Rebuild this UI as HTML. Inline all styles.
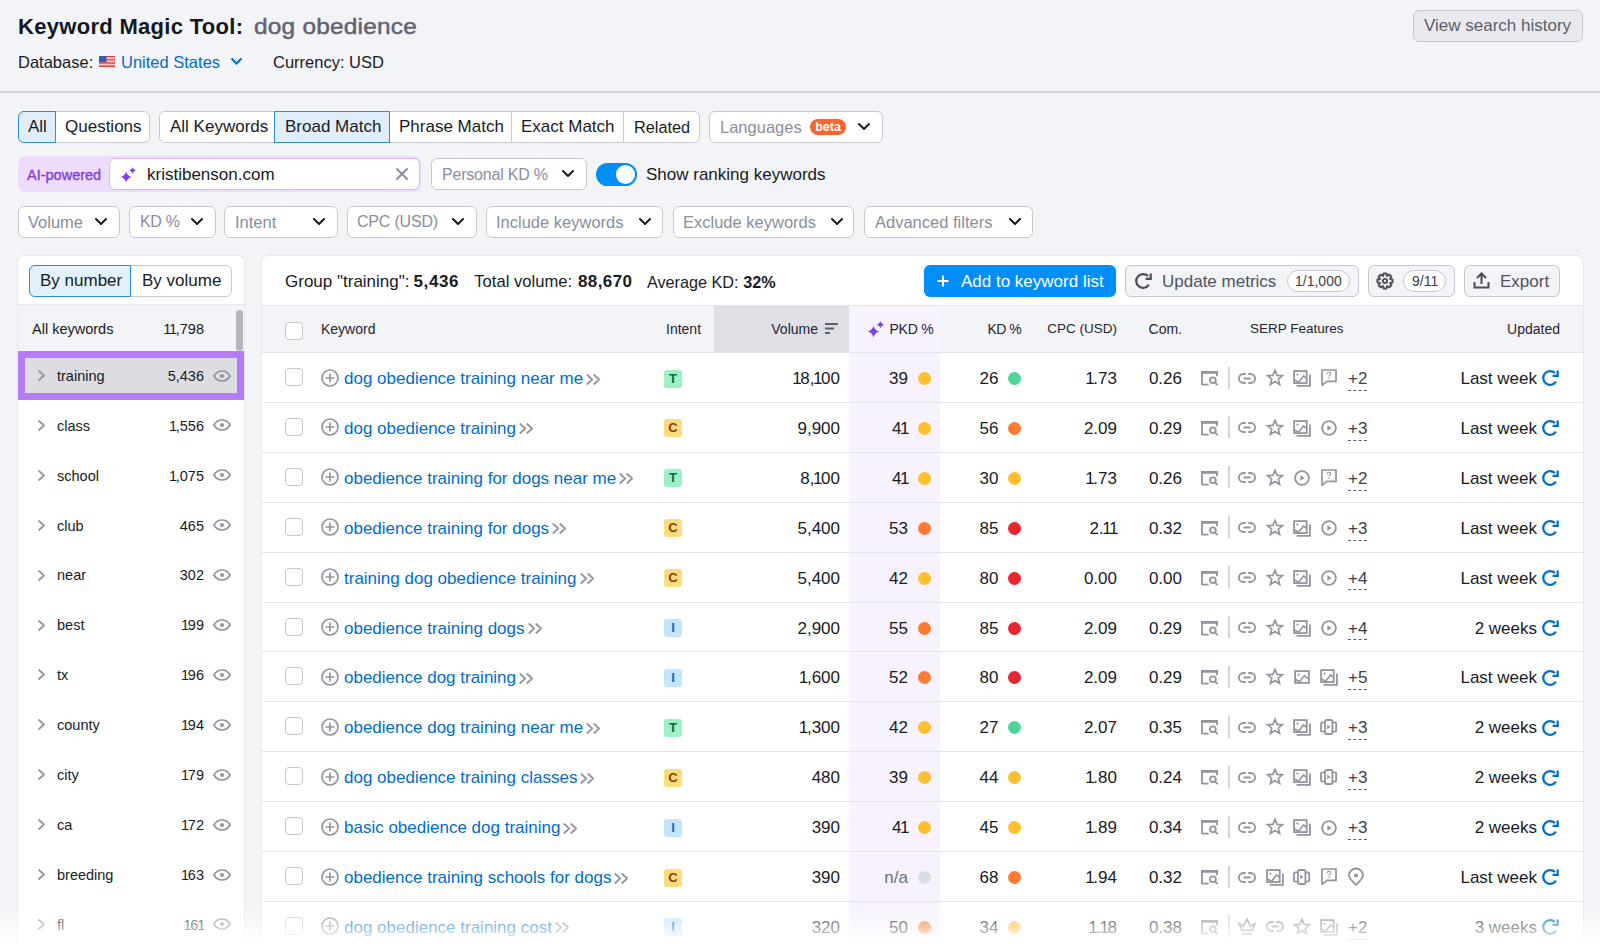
<!DOCTYPE html>
<html><head><meta charset="utf-8"><style>
*{box-sizing:border-box;margin:0;padding:0}
html,body{width:1600px;height:952px;overflow:hidden}
body{position:relative;background:#f3f4f8;font-family:"Liberation Sans",sans-serif;color:#191b23;font-size:17px}
.a{position:absolute;white-space:nowrap}
.t{position:absolute;white-space:nowrap;line-height:20px}
.btn{position:absolute;background:#fff;border:1px solid #c8cad2;border-radius:6px}
.ph{color:#8b8e9a}
svg{position:absolute;overflow:visible}
.r{position:absolute;white-space:nowrap;line-height:20px;text-align:right}
.h{font-size:14px;color:#23252d}
.cb{position:absolute;width:18px;height:18px;border:1px solid #c5c7cf;border-radius:4px;background:#fff}
.kw{color:#006dca}
.o{margin:0 -0.084em}
</style></head><body>
<!-- HEADER -->
<div class="t" style="left:18px;top:15px;font-size:22px;line-height:24px;font-weight:bold;letter-spacing:0.3px;color:#15171f">Keyword Magic Tool:</div>
<div class="t" style="left:254px;top:15px;font-size:21.5px;line-height:24px;letter-spacing:0.2px;color:#60636f;-webkit-text-stroke:0.45px #60636f;transform:scaleX(1.135);transform-origin:0 0">dog obedience</div>

<div class="btn" style="left:1413px;top:10px;width:170px;height:32px;background:#e9eaef;border-color:#c6c8d0"></div>
<div class="t" style="left:1424px;top:16px;color:#5c5f6b">View search history</div>

<div class="t" style="left:18px;top:51.5px;font-size:16.5px">Database:</div>
<svg style="left:99px;top:56px" width="16" height="11" viewBox="0 0 16 11"><rect x="0" y="0.00" width="16" height="1.57" fill="#e0443a"/><rect x="0" y="1.57" width="16" height="1.57" fill="#f6c9c5"/><rect x="0" y="3.14" width="16" height="1.57" fill="#e0443a"/><rect x="0" y="4.71" width="16" height="1.57" fill="#f6c9c5"/><rect x="0" y="6.29" width="16" height="1.57" fill="#e0443a"/><rect x="0" y="7.86" width="16" height="1.57" fill="#f6c9c5"/><rect x="0" y="9.43" width="16" height="1.57" fill="#e0443a"/><rect x="0" y="0" width="7.5" height="6.3" fill="#4656b0"/></svg>

<div class="t" style="left:121px;top:51.5px;font-size:16.5px;color:#006dca">United States</div>
<svg class="a" style="left:230px;top:57px" width="13" height="9" viewBox="0 0 13 9"><path d="M1.5 1.5 L6.5 6.5 L11.5 1.5" fill="none" stroke="#006dca" stroke-width="2"/></svg>
<div class="t" style="left:273px;top:51.5px;font-size:16.5px">Currency: USD</div>

<div class="a" style="left:0;top:91px;width:1600px;height:2px;background:#d3d5dc"></div>

<!-- ROW 1 TABS -->
<div class="btn" style="left:18px;top:111px;width:132px;height:32px"></div>
<div class="a" style="left:18px;top:111px;width:38px;height:32px;background:#e0eefb;border:1px solid #2b8ee0;border-radius:6px 0 0 6px"></div>
<div class="t" style="left:28px;top:117px">All</div>
<div class="t" style="left:65px;top:117px">Questions</div>

<div class="btn" style="left:159px;top:111px;width:541px;height:32px"></div>
<div class="a" style="left:274px;top:111px;width:116px;height:32px;background:#e0eefb;border:1px solid #2b8ee0"></div>
<div class="a" style="left:511px;top:112px;width:1px;height:30px;background:#c8cad2"></div>
<div class="a" style="left:623px;top:112px;width:1px;height:30px;background:#c8cad2"></div>
<div class="t" style="left:170px;top:117px">All Keywords</div>
<div class="t" style="left:285px;top:117px">Broad Match</div>
<div class="t" style="left:399px;top:117px">Phrase Match</div>
<div class="t" style="left:521px;top:117px">Exact Match</div>
<div class="t" style="left:634px;top:117px;font-size:16.3px">Related</div>

<div class="btn" style="left:709px;top:111px;width:174px;height:32px"></div>
<div class="t ph" style="font-size:16.5px;left:720px;top:117px">Languages</div>
<div class="a" style="left:810px;top:119px;width:36px;height:16px;background:#ff642d;border-radius:8px;color:#fff;font-size:12.5px;font-weight:bold;line-height:16px;text-align:center">beta</div>

<!-- ROW 2 -->
<div class="a" style="left:18px;top:156px;width:403px;height:36px;background:#eedcfc;border-radius:8px"></div>
<div class="t" style="left:27px;top:165px;font-size:14.5px;color:#7b3fe4;-webkit-text-stroke:0.35px #7b3fe4">AI-powered</div>
<div class="a" style="left:109px;top:158px;width:311px;height:32px;background:#fff;border:1px solid #d9b8fb;border-radius:6px"></div>
<div class="t" style="left:147px;top:165px">kristibenson.com</div>

<div class="btn" style="left:431px;top:158px;width:156px;height:32px"></div>
<div class="t ph" style="font-size:16px;letter-spacing:-0.2px;left:442px;top:165px">Personal KD %</div>

<div class="a" style="left:596px;top:163px;width:41px;height:23px;background:#008ff8;border-radius:12px"></div>
<div class="a" style="left:616px;top:165px;width:19px;height:19px;background:#fff;border-radius:50%"></div>
<div class="t" style="left:646px;top:165px">Show ranking keywords</div>

<!-- ROW 3 -->
<div class="btn" style="left:18px;top:206px;width:102px;height:32px"></div>
<div class="t ph" style="font-size:16.5px;left:28px;top:212px">Volume</div>
<div class="btn" style="left:129px;top:206px;width:87px;height:32px"></div>
<div class="t ph" style="font-size:16px;letter-spacing:-0.3px;left:140px;top:212px">KD %</div>
<div class="btn" style="left:224px;top:206px;width:114px;height:32px"></div>
<div class="t ph" style="font-size:16.5px;left:235px;top:212px">Intent</div>
<div class="btn" style="left:347px;top:206px;width:130px;height:32px"></div>
<div class="t ph" style="font-size:16px;letter-spacing:-0.2px;left:357px;top:212px">CPC (USD)</div>
<div class="btn" style="left:486px;top:206px;width:177px;height:32px"></div>
<div class="t ph" style="font-size:16.5px;left:496px;top:212px">Include keywords</div>
<div class="btn" style="left:673px;top:206px;width:181px;height:32px"></div>
<div class="t ph" style="font-size:16.5px;left:683px;top:212px">Exclude keywords</div>
<div class="btn" style="left:864px;top:206px;width:169px;height:32px"></div>
<div class="t ph" style="font-size:16.5px;left:875px;top:212px">Advanced filters</div>


<svg style="left:858px;top:123px" width="12" height="8" viewBox="0 0 12 8"><path d="M1 1 L6 6 L11 1" fill="none" stroke="#191b23" stroke-width="2" stroke-linecap="round" stroke-linejoin="round"/></svg>
<svg style="left:562px;top:170px" width="12" height="8" viewBox="0 0 12 8"><path d="M1 1 L6 6 L11 1" fill="none" stroke="#191b23" stroke-width="2" stroke-linecap="round" stroke-linejoin="round"/></svg>
<svg style="left:95px;top:218px" width="12" height="8" viewBox="0 0 12 8"><path d="M1 1 L6 6 L11 1" fill="none" stroke="#191b23" stroke-width="2" stroke-linecap="round" stroke-linejoin="round"/></svg>
<svg style="left:191px;top:218px" width="12" height="8" viewBox="0 0 12 8"><path d="M1 1 L6 6 L11 1" fill="none" stroke="#191b23" stroke-width="2" stroke-linecap="round" stroke-linejoin="round"/></svg>
<svg style="left:313px;top:218px" width="12" height="8" viewBox="0 0 12 8"><path d="M1 1 L6 6 L11 1" fill="none" stroke="#191b23" stroke-width="2" stroke-linecap="round" stroke-linejoin="round"/></svg>
<svg style="left:452px;top:218px" width="12" height="8" viewBox="0 0 12 8"><path d="M1 1 L6 6 L11 1" fill="none" stroke="#191b23" stroke-width="2" stroke-linecap="round" stroke-linejoin="round"/></svg>
<svg style="left:639px;top:218px" width="12" height="8" viewBox="0 0 12 8"><path d="M1 1 L6 6 L11 1" fill="none" stroke="#191b23" stroke-width="2" stroke-linecap="round" stroke-linejoin="round"/></svg>
<svg style="left:831px;top:218px" width="12" height="8" viewBox="0 0 12 8"><path d="M1 1 L6 6 L11 1" fill="none" stroke="#191b23" stroke-width="2" stroke-linecap="round" stroke-linejoin="round"/></svg>
<svg style="left:1009px;top:218px" width="12" height="8" viewBox="0 0 12 8"><path d="M1 1 L6 6 L11 1" fill="none" stroke="#191b23" stroke-width="2" stroke-linecap="round" stroke-linejoin="round"/></svg>
<svg style="left:121px;top:167px" width="15" height="15" viewBox="0 0 16 16"><path d="M5.50 4.80 Q6.66 9.44 11.30 10.60 Q6.66 11.76 5.50 16.40 Q4.34 11.76 -0.30 10.60 Q4.34 9.44 5.50 4.80Z M12.40 0.30 Q13.08 3.02 15.80 3.70 Q13.08 4.38 12.40 7.10 Q11.72 4.38 9.00 3.70 Q11.72 3.02 12.40 0.30Z" fill="#7b3fe4"/></svg>
<svg style="left:396px;top:168px" width="12" height="12" viewBox="0 0 12 12"><path d="M1 1 L11 11 M11 1 L1 11" stroke="#8b8e9a" stroke-width="2" stroke-linecap="round"/></svg>
<div class="a" style="left:18px;top:256px;width:226px;height:700px;background:#fff;border-radius:6px 6px 0 0;box-shadow:0 0 0 1px #e8e9ee"></div>
<div class="btn" style="left:29px;top:265px;width:203px;height:32px"></div>
<div class="a" style="left:29px;top:265px;width:102px;height:32px;background:#e3f1fc;border:1px solid #2b8ee0;border-radius:6px 0 0 6px"></div>
<div class="t" style="left:40px;top:271px;">By number</div>
<div class="t" style="left:142px;top:271px;">By volume</div>
<div class="a" style="left:18px;top:304px;width:226px;height:1px;background:#e6e7ec"></div>
<div class="a" style="left:18px;top:305px;width:226px;height:46px;background:#f3f4f8"></div>
<div class="t" style="left:32px;top:319px;font-size:14.5px">All keywords</div>
<div class="r" style="right:1396px;top:319px;font-size:14.5px"><span class="o">1</span><span class="o">1</span>,798</div>
<div class="a" style="left:236px;top:310px;width:7px;height:41px;background:#b3b5bd;border-radius:4px"></div>
<div class="a" style="left:18px;top:351px;width:226px;height:49px;background:#dcdde3;border:7px solid #b57cf5"></div>
<svg style="left:38px;top:370.0px" width="7" height="11" viewBox="0 0 7 11"><path d="M1 1 L6 5.5 L1 10" fill="none" stroke="#9294a0" stroke-width="1.7" stroke-linecap="round" stroke-linejoin="round"/></svg>
<div class="t" style="left:57px;top:365.8px;font-size:14.5px">training</div>
<div class="r" style="right:1396px;top:365.8px;font-size:14.5px">5,436</div>
<svg style="left:213px;top:369.5px" width="18" height="12" viewBox="0 0 18 12"><path d="M1 6 C3.5 1.5 6 1 9 1 C12 1 14.5 1.5 17 6 C14.5 10.5 12 11 9 11 C6 11 3.5 10.5 1 6Z" fill="none" stroke="#9294a0" stroke-width="1.7"/><circle cx="9" cy="6" r="2" fill="#9294a0"/></svg>
<svg style="left:38px;top:419.9px" width="7" height="11" viewBox="0 0 7 11"><path d="M1 1 L6 5.5 L1 10" fill="none" stroke="#9294a0" stroke-width="1.7" stroke-linecap="round" stroke-linejoin="round"/></svg>
<div class="t" style="left:57px;top:415.7px;font-size:14.5px">class</div>
<div class="r" style="right:1396px;top:415.7px;font-size:14.5px"><span class="o">1</span>,556</div>
<svg style="left:213px;top:419.4px" width="18" height="12" viewBox="0 0 18 12"><path d="M1 6 C3.5 1.5 6 1 9 1 C12 1 14.5 1.5 17 6 C14.5 10.5 12 11 9 11 C6 11 3.5 10.5 1 6Z" fill="none" stroke="#9294a0" stroke-width="1.7"/><circle cx="9" cy="6" r="2" fill="#9294a0"/></svg>
<svg style="left:38px;top:469.8px" width="7" height="11" viewBox="0 0 7 11"><path d="M1 1 L6 5.5 L1 10" fill="none" stroke="#9294a0" stroke-width="1.7" stroke-linecap="round" stroke-linejoin="round"/></svg>
<div class="t" style="left:57px;top:465.6px;font-size:14.5px">school</div>
<div class="r" style="right:1396px;top:465.6px;font-size:14.5px"><span class="o">1</span>,075</div>
<svg style="left:213px;top:469.3px" width="18" height="12" viewBox="0 0 18 12"><path d="M1 6 C3.5 1.5 6 1 9 1 C12 1 14.5 1.5 17 6 C14.5 10.5 12 11 9 11 C6 11 3.5 10.5 1 6Z" fill="none" stroke="#9294a0" stroke-width="1.7"/><circle cx="9" cy="6" r="2" fill="#9294a0"/></svg>
<svg style="left:38px;top:519.7px" width="7" height="11" viewBox="0 0 7 11"><path d="M1 1 L6 5.5 L1 10" fill="none" stroke="#9294a0" stroke-width="1.7" stroke-linecap="round" stroke-linejoin="round"/></svg>
<div class="t" style="left:57px;top:515.5px;font-size:14.5px">club</div>
<div class="r" style="right:1396px;top:515.5px;font-size:14.5px">465</div>
<svg style="left:213px;top:519.2px" width="18" height="12" viewBox="0 0 18 12"><path d="M1 6 C3.5 1.5 6 1 9 1 C12 1 14.5 1.5 17 6 C14.5 10.5 12 11 9 11 C6 11 3.5 10.5 1 6Z" fill="none" stroke="#9294a0" stroke-width="1.7"/><circle cx="9" cy="6" r="2" fill="#9294a0"/></svg>
<svg style="left:38px;top:569.6px" width="7" height="11" viewBox="0 0 7 11"><path d="M1 1 L6 5.5 L1 10" fill="none" stroke="#9294a0" stroke-width="1.7" stroke-linecap="round" stroke-linejoin="round"/></svg>
<div class="t" style="left:57px;top:565.4px;font-size:14.5px">near</div>
<div class="r" style="right:1396px;top:565.4px;font-size:14.5px">302</div>
<svg style="left:213px;top:569.1px" width="18" height="12" viewBox="0 0 18 12"><path d="M1 6 C3.5 1.5 6 1 9 1 C12 1 14.5 1.5 17 6 C14.5 10.5 12 11 9 11 C6 11 3.5 10.5 1 6Z" fill="none" stroke="#9294a0" stroke-width="1.7"/><circle cx="9" cy="6" r="2" fill="#9294a0"/></svg>
<svg style="left:38px;top:619.5px" width="7" height="11" viewBox="0 0 7 11"><path d="M1 1 L6 5.5 L1 10" fill="none" stroke="#9294a0" stroke-width="1.7" stroke-linecap="round" stroke-linejoin="round"/></svg>
<div class="t" style="left:57px;top:615.3px;font-size:14.5px">best</div>
<div class="r" style="right:1396px;top:615.3px;font-size:14.5px"><span class="o">1</span>99</div>
<svg style="left:213px;top:619.0px" width="18" height="12" viewBox="0 0 18 12"><path d="M1 6 C3.5 1.5 6 1 9 1 C12 1 14.5 1.5 17 6 C14.5 10.5 12 11 9 11 C6 11 3.5 10.5 1 6Z" fill="none" stroke="#9294a0" stroke-width="1.7"/><circle cx="9" cy="6" r="2" fill="#9294a0"/></svg>
<svg style="left:38px;top:669.4px" width="7" height="11" viewBox="0 0 7 11"><path d="M1 1 L6 5.5 L1 10" fill="none" stroke="#9294a0" stroke-width="1.7" stroke-linecap="round" stroke-linejoin="round"/></svg>
<div class="t" style="left:57px;top:665.2px;font-size:14.5px">tx</div>
<div class="r" style="right:1396px;top:665.2px;font-size:14.5px"><span class="o">1</span>96</div>
<svg style="left:213px;top:668.9px" width="18" height="12" viewBox="0 0 18 12"><path d="M1 6 C3.5 1.5 6 1 9 1 C12 1 14.5 1.5 17 6 C14.5 10.5 12 11 9 11 C6 11 3.5 10.5 1 6Z" fill="none" stroke="#9294a0" stroke-width="1.7"/><circle cx="9" cy="6" r="2" fill="#9294a0"/></svg>
<svg style="left:38px;top:719.3px" width="7" height="11" viewBox="0 0 7 11"><path d="M1 1 L6 5.5 L1 10" fill="none" stroke="#9294a0" stroke-width="1.7" stroke-linecap="round" stroke-linejoin="round"/></svg>
<div class="t" style="left:57px;top:715.1px;font-size:14.5px">county</div>
<div class="r" style="right:1396px;top:715.1px;font-size:14.5px"><span class="o">1</span>94</div>
<svg style="left:213px;top:718.8px" width="18" height="12" viewBox="0 0 18 12"><path d="M1 6 C3.5 1.5 6 1 9 1 C12 1 14.5 1.5 17 6 C14.5 10.5 12 11 9 11 C6 11 3.5 10.5 1 6Z" fill="none" stroke="#9294a0" stroke-width="1.7"/><circle cx="9" cy="6" r="2" fill="#9294a0"/></svg>
<svg style="left:38px;top:769.2px" width="7" height="11" viewBox="0 0 7 11"><path d="M1 1 L6 5.5 L1 10" fill="none" stroke="#9294a0" stroke-width="1.7" stroke-linecap="round" stroke-linejoin="round"/></svg>
<div class="t" style="left:57px;top:765.0px;font-size:14.5px">city</div>
<div class="r" style="right:1396px;top:765.0px;font-size:14.5px"><span class="o">1</span>79</div>
<svg style="left:213px;top:768.7px" width="18" height="12" viewBox="0 0 18 12"><path d="M1 6 C3.5 1.5 6 1 9 1 C12 1 14.5 1.5 17 6 C14.5 10.5 12 11 9 11 C6 11 3.5 10.5 1 6Z" fill="none" stroke="#9294a0" stroke-width="1.7"/><circle cx="9" cy="6" r="2" fill="#9294a0"/></svg>
<svg style="left:38px;top:819.1px" width="7" height="11" viewBox="0 0 7 11"><path d="M1 1 L6 5.5 L1 10" fill="none" stroke="#9294a0" stroke-width="1.7" stroke-linecap="round" stroke-linejoin="round"/></svg>
<div class="t" style="left:57px;top:814.9px;font-size:14.5px">ca</div>
<div class="r" style="right:1396px;top:814.9px;font-size:14.5px"><span class="o">1</span>72</div>
<svg style="left:213px;top:818.6px" width="18" height="12" viewBox="0 0 18 12"><path d="M1 6 C3.5 1.5 6 1 9 1 C12 1 14.5 1.5 17 6 C14.5 10.5 12 11 9 11 C6 11 3.5 10.5 1 6Z" fill="none" stroke="#9294a0" stroke-width="1.7"/><circle cx="9" cy="6" r="2" fill="#9294a0"/></svg>
<svg style="left:38px;top:869.0px" width="7" height="11" viewBox="0 0 7 11"><path d="M1 1 L6 5.5 L1 10" fill="none" stroke="#9294a0" stroke-width="1.7" stroke-linecap="round" stroke-linejoin="round"/></svg>
<div class="t" style="left:57px;top:864.8px;font-size:14.5px">breeding</div>
<div class="r" style="right:1396px;top:864.8px;font-size:14.5px"><span class="o">1</span>63</div>
<svg style="left:213px;top:868.5px" width="18" height="12" viewBox="0 0 18 12"><path d="M1 6 C3.5 1.5 6 1 9 1 C12 1 14.5 1.5 17 6 C14.5 10.5 12 11 9 11 C6 11 3.5 10.5 1 6Z" fill="none" stroke="#9294a0" stroke-width="1.7"/><circle cx="9" cy="6" r="2" fill="#9294a0"/></svg>
<svg style="left:38px;top:918.9px" width="7" height="11" viewBox="0 0 7 11"><path d="M1 1 L6 5.5 L1 10" fill="none" stroke="#9294a0" stroke-width="1.7" stroke-linecap="round" stroke-linejoin="round"/></svg>
<div class="t" style="left:57px;top:914.7px;font-size:14.5px">fl</div>
<div class="r" style="right:1396px;top:914.7px;font-size:14.5px"><span class="o">1</span>6<span class="o">1</span></div>
<svg style="left:213px;top:918.4px" width="18" height="12" viewBox="0 0 18 12"><path d="M1 6 C3.5 1.5 6 1 9 1 C12 1 14.5 1.5 17 6 C14.5 10.5 12 11 9 11 C6 11 3.5 10.5 1 6Z" fill="none" stroke="#9294a0" stroke-width="1.7"/><circle cx="9" cy="6" r="2" fill="#9294a0"/></svg>
<div class="a" style="left:262px;top:256px;width:1321px;height:700px;background:#fff;border-radius:6px 6px 0 0;box-shadow:0 0 0 1px #e8e9ee"></div>
<div class="t" style="left:285px;top:272px;">Group "training":</div>
<div class="t" style="left:413.5px;top:272px;font-weight:bold;letter-spacing:0.6px">5,436</div>
<div class="t" style="left:474.3px;top:272px;font-size:16.6px">Total volume:</div>
<div class="t" style="left:578px;top:272px;font-weight:bold;letter-spacing:0.4px">88,670</div>
<div class="t" style="left:647px;top:272px;font-size:16.2px">Average KD:</div>
<div class="t" style="left:743.3px;top:272px;font-weight:bold;font-size:16.2px">32%</div>
<div class="a" style="left:924px;top:265px;width:192px;height:32px;background:#008ff8;border-radius:6px"></div>
<svg style="left:937px;top:275px" width="12" height="12" viewBox="0 0 12 12"><path d="M6 0.5 V11.5 M0.5 6 H11.5" stroke="#fff" stroke-width="2"/></svg>
<div class="t" style="left:961px;top:272px;color:#fff">Add to keyword list</div>
<div class="btn" style="left:1125px;top:265px;width:234px;height:32px;background:#f3f4f8;border-color:#c6c8d0"></div>
<svg style="left:1133.4px;top:270.8px" width="20" height="20" viewBox="-10 -10 20 20"><path d="M5 -4.9 A6.9 6.9 0 1 0 5.9 3.7" fill="none" stroke="#4a4c57" stroke-width="2.2"/><path d="M2.6 -2.1 H7.7 V-7.6" fill="none" stroke="#4a4c57" stroke-width="2.2"/></svg>
<div class="t" style="left:1162px;top:272px;color:#4f525d">Update metrics</div>
<div class="a" style="left:1287px;top:270px;width:63px;height:22px;border:1px solid #c6c8d0;border-radius:11px;background:#fff"></div>
<div class="t" style="left:1295px;top:271px;font-size:14px;color:#3c3e48">1/1,000</div>
<div class="btn" style="left:1368px;top:265px;width:87px;height:32px;background:#f3f4f8;border-color:#c6c8d0"></div>
<svg style="left:1375.4px;top:270.8px" width="20" height="20" viewBox="0 0 20 20"><path d="M8.06 4.85 L8.55 2.44 L11.45 2.44 L11.94 4.85 L12.27 4.99 L14.32 3.62 L16.38 5.68 L15.01 7.73 L15.15 8.06 L17.56 8.55 L17.56 11.45 L15.15 11.94 L15.01 12.27 L16.38 14.32 L14.32 16.38 L12.27 15.01 L11.94 15.15 L11.45 17.56 L8.55 17.56 L8.06 15.15 L7.73 15.01 L5.68 16.38 L3.62 14.32 L4.99 12.27 L4.85 11.94 L2.44 11.45 L2.44 8.55 L4.85 8.06 L4.99 7.73 L3.62 5.68 L5.68 3.62 L7.73 4.99Z" fill="none" stroke="#4a4c57" stroke-width="1.9" stroke-linejoin="round"/><circle cx="10" cy="10" r="2.1" fill="none" stroke="#4a4c57" stroke-width="1.9"/></svg>
<div class="a" style="left:1403px;top:270px;width:43px;height:22px;border:1px solid #c6c8d0;border-radius:11px;background:#fff"></div>
<div class="t" style="left:1412px;top:271px;font-size:14px;color:#3c3e48">9/11</div>
<div class="btn" style="left:1464px;top:265px;width:96px;height:32px;background:#f3f4f8;border-color:#c6c8d0"></div>
<svg style="left:1473px;top:272px" width="17" height="17" viewBox="0 0 17 17"><path d="M8.5 12 V2 M4 6 L8.5 1.5 L13 6 M1.5 10 V15.5 H15.5 V10" fill="none" stroke="#4a4c57" stroke-width="2"/></svg>
<div class="t" style="left:1500px;top:272px;color:#4f525d">Export</div>
<div class="a" style="left:262px;top:304.5px;width:1321px;height:1.5px;background:#e4e5eb"></div>
<div class="a" style="left:262px;top:306px;width:1321px;height:46.5px;background:#f3f4f8"></div>
<div class="a" style="left:714px;top:306px;width:135px;height:46.5px;background:#dfe0e6"></div>
<div class="a" style="left:849px;top:306px;width:91px;height:700px;background:#f7f2fe"></div>
<div class="a" style="left:262px;top:352px;width:1321px;height:1.2px;background:#e3e4ea"></div>
<div class="cb" style="left:285px;top:322px"></div>
<div class="t" style="left:321px;top:319px;font-size:14px;color:#23252d">Keyword</div>
<div class="t" style="left:666px;top:319px;font-size:14px;color:#23252d">Intent</div>
<div class="r" style="right:782px;top:319px;font-size:14px;color:#23252d">Volume</div>
<svg style="left:825px;top:323px" width="13" height="11" viewBox="0 0 13 11"><path d="M0 1 H13 M0 5.5 H9 M0 10 H5" stroke="#5c5f6b" stroke-width="1.8"/></svg>
<svg style="left:868px;top:321px" width="16" height="16" viewBox="0 0 16 16"><path d="M5.50 4.80 Q6.66 9.44 11.30 10.60 Q6.66 11.76 5.50 16.40 Q4.34 11.76 -0.30 10.60 Q4.34 9.44 5.50 4.80Z M12.40 0.30 Q13.08 3.02 15.80 3.70 Q13.08 4.38 12.40 7.10 Q11.72 4.38 9.00 3.70 Q11.72 3.02 12.40 0.30Z" fill="#7b3fe4"/></svg>
<div class="t" style="left:889.5px;top:319px;font-size:14px;letter-spacing:-0.25px;color:#23252d">PKD %</div>
<div class="r" style="right:579px;top:319px;font-size:14px;letter-spacing:-0.6px;color:#23252d">KD %</div>
<div class="r" style="right:483px;top:319px;font-size:13.5px;color:#23252d">CPC (USD)</div>
<div class="r" style="right:418px;top:319px;font-size:14px;color:#23252d">Com.</div>
<div class="t" style="left:1250px;top:319px;font-size:13.5px;color:#23252d">SERP Features</div>
<div class="r" style="right:40px;top:319px;font-size:14px;color:#23252d">Updated</div>
<div class="cb" style="left:285px;top:368.0px"></div>
<svg style="left:321px;top:368.5px" width="18" height="18" viewBox="0 0 18 18"><circle cx="9" cy="9" r="8" fill="none" stroke="#9294a0" stroke-width="1.7"/><path d="M9 4.5 V13.5 M4.5 9 H13.5" stroke="#9294a0" stroke-width="1.7"/></svg>
<div class="t" style="left:344px;top:369.0px;color:#006dca">dog obedience training near me</div>
<svg style="left:586.1px;top:373.5px" width="15" height="11" viewBox="0 0 15 11"><path d="M1.3 1 L6.2 5.5 L1.3 10 M8.2 1 L13.1 5.5 L8.2 10" fill="none" stroke="#9294a0" stroke-width="1.8" stroke-linecap="round" stroke-linejoin="round"/></svg>
<div class="a" style="left:664px;top:369.5px;width:18px;height:18px;background:#9ef0c6;border-radius:3px;color:#0b6b43;font-size:13px;font-weight:bold;line-height:18.5px;text-align:center">T</div>
<div class="r" style="right:760px;top:369.0px;"><span class="o">1</span>8,<span class="o">1</span>00</div>
<div class="r" style="right:692px;top:369.0px;">39</div>
<div class="a" style="left:918px;top:372.0px;width:13px;height:13px;border-radius:50%;background:#ffbf2f"></div>
<div class="r" style="right:601.5px;top:369.0px;">26</div>
<div class="a" style="left:1008px;top:372.0px;width:13px;height:13px;border-radius:50%;background:#4fd49b"></div>
<div class="r" style="right:483px;top:369.0px;"><span class="o">1</span>.73</div>
<div class="r" style="right:418px;top:369.0px;">0.26</div>
<div class="a" style="left:1228px;top:366.5px;width:1.5px;height:22px;background:#d3d5dc"></div>
<svg style="left:1201.1px;top:371.0px" width="17" height="15" viewBox="0 0 17 15"><path d="M1 14 V1 H16 V5.2" fill="none" stroke="#9294a0" stroke-width="1.8"/><path d="M0.1 1.4 H16.9" stroke="#9294a0" stroke-width="2.8"/><path d="M1 13.6 H7.6" stroke="#9294a0" stroke-width="1.8"/><circle cx="11.9" cy="9.3" r="2.9" fill="none" stroke="#9294a0" stroke-width="1.8"/><path d="M13.9 11.4 L16.2 13.7" stroke="#9294a0" stroke-width="1.8" stroke-linecap="round"/></svg>
<svg style="left:1238.3px;top:372.5px" width="18" height="11" viewBox="0 0 18 11"><path d="M7.7 1 H5.4 A4.5 4.5 0 0 0 5.4 10 H7.7 M10.3 1 H12.6 A4.5 4.5 0 0 1 12.6 10 H10.3" fill="none" stroke="#9294a0" stroke-width="1.8"/><path d="M6.3 5.5 H11.7" stroke="#9294a0" stroke-width="1.8" stroke-linecap="round"/></svg>
<svg style="left:1265.6px;top:369.0px" width="18" height="17" viewBox="0 0 18 17"><path d="M9 1.4 L11.1 6.4 L16.4 6.8 L12.3 10.2 L13.6 15.4 L9 12.6 L4.4 15.4 L5.7 10.2 L1.6 6.8 L6.9 6.4Z" fill="none" stroke="#9294a0" stroke-width="1.7" stroke-linejoin="miter"/></svg>
<svg style="left:1292.9px;top:370.0px" width="18" height="17" viewBox="0 0 18 17"><rect x="1.1" y="1.1" width="12.6" height="12" fill="none" stroke="#9294a0" stroke-width="1.8"/><path d="M16.9 4.6 V15.9 H3.6" fill="none" stroke="#9294a0" stroke-width="1.8"/><path d="M1.5 10 L5.6 12.2 L10.6 6 L13 8.2" fill="none" stroke="#9294a0" stroke-width="1.6"/><circle cx="4.4" cy="4.6" r="1.1" fill="#9294a0"/></svg>
<svg style="left:1320.9px;top:369.0px" width="16" height="17" viewBox="0 0 16 17"><path d="M1 1 H15 V12.4 H6 L1 16.2Z" fill="none" stroke="#9294a0" stroke-width="1.7" stroke-linejoin="round"/><path d="M6.3 5 Q6.3 3.3 8 3.3 Q9.7 3.3 9.7 4.8 Q9.7 5.8 8.4 6.4 Q8 6.7 8 7.6" fill="none" stroke="#9294a0" stroke-width="1.1"/><circle cx="8" cy="9.3" r="0.75" fill="#9294a0"/></svg>
<div class="t" style="left:1348px;top:369.0px;color:#3c3e48">+2</div>
<div class="a" style="left:1348px;top:389.8px;width:19px;height:0;border-top:1px dashed #5c5f6b"></div>
<div class="r" style="right:63px;top:369.0px;">Last week</div>
<svg style="left:1540.3px;top:368.4px" width="20" height="20" viewBox="-10 -10 20 20"><path d="M5 -4.9 A6.9 6.9 0 1 0 5.9 3.7" fill="none" stroke="#006dca" stroke-width="2.2"/><path d="M2.6 -2.1 H7.7 V-7.6" fill="none" stroke="#006dca" stroke-width="2.2"/></svg>
<div class="a" style="left:262px;top:401.9px;width:1321px;height:1px;background:#e3e4ea"></div>
<div class="cb" style="left:285px;top:417.9px"></div>
<svg style="left:321px;top:418.4px" width="18" height="18" viewBox="0 0 18 18"><circle cx="9" cy="9" r="8" fill="none" stroke="#9294a0" stroke-width="1.7"/><path d="M9 4.5 V13.5 M4.5 9 H13.5" stroke="#9294a0" stroke-width="1.7"/></svg>
<div class="t" style="left:344px;top:418.9px;color:#006dca">dog obedience training</div>
<svg style="left:519.0px;top:423.4px" width="15" height="11" viewBox="0 0 15 11"><path d="M1.3 1 L6.2 5.5 L1.3 10 M8.2 1 L13.1 5.5 L8.2 10" fill="none" stroke="#9294a0" stroke-width="1.8" stroke-linecap="round" stroke-linejoin="round"/></svg>
<div class="a" style="left:664px;top:419.4px;width:18px;height:18px;background:#fcdc7f;border-radius:3px;color:#8a3d00;font-size:13px;font-weight:bold;line-height:18.5px;text-align:center">C</div>
<div class="r" style="right:760px;top:418.9px;">9,900</div>
<div class="r" style="right:692px;top:418.9px;">4<span class="o">1</span></div>
<div class="a" style="left:918px;top:421.9px;width:13px;height:13px;border-radius:50%;background:#ffbf2f"></div>
<div class="r" style="right:601.5px;top:418.9px;">56</div>
<div class="a" style="left:1008px;top:421.9px;width:13px;height:13px;border-radius:50%;background:#ff7a33"></div>
<div class="r" style="right:483px;top:418.9px;">2.09</div>
<div class="r" style="right:418px;top:418.9px;">0.29</div>
<div class="a" style="left:1228px;top:416.4px;width:1.5px;height:22px;background:#d3d5dc"></div>
<svg style="left:1201.1px;top:420.9px" width="17" height="15" viewBox="0 0 17 15"><path d="M1 14 V1 H16 V5.2" fill="none" stroke="#9294a0" stroke-width="1.8"/><path d="M0.1 1.4 H16.9" stroke="#9294a0" stroke-width="2.8"/><path d="M1 13.6 H7.6" stroke="#9294a0" stroke-width="1.8"/><circle cx="11.9" cy="9.3" r="2.9" fill="none" stroke="#9294a0" stroke-width="1.8"/><path d="M13.9 11.4 L16.2 13.7" stroke="#9294a0" stroke-width="1.8" stroke-linecap="round"/></svg>
<svg style="left:1238.3px;top:422.4px" width="18" height="11" viewBox="0 0 18 11"><path d="M7.7 1 H5.4 A4.5 4.5 0 0 0 5.4 10 H7.7 M10.3 1 H12.6 A4.5 4.5 0 0 1 12.6 10 H10.3" fill="none" stroke="#9294a0" stroke-width="1.8"/><path d="M6.3 5.5 H11.7" stroke="#9294a0" stroke-width="1.8" stroke-linecap="round"/></svg>
<svg style="left:1265.6px;top:418.9px" width="18" height="17" viewBox="0 0 18 17"><path d="M9 1.4 L11.1 6.4 L16.4 6.8 L12.3 10.2 L13.6 15.4 L9 12.6 L4.4 15.4 L5.7 10.2 L1.6 6.8 L6.9 6.4Z" fill="none" stroke="#9294a0" stroke-width="1.7" stroke-linejoin="miter"/></svg>
<svg style="left:1292.9px;top:419.9px" width="18" height="17" viewBox="0 0 18 17"><rect x="1.1" y="1.1" width="12.6" height="12" fill="none" stroke="#9294a0" stroke-width="1.8"/><path d="M16.9 4.6 V15.9 H3.6" fill="none" stroke="#9294a0" stroke-width="1.8"/><path d="M1.5 10 L5.6 12.2 L10.6 6 L13 8.2" fill="none" stroke="#9294a0" stroke-width="1.6"/><circle cx="4.4" cy="4.6" r="1.1" fill="#9294a0"/></svg>
<svg style="left:1320.9px;top:420.4px" width="16" height="16" viewBox="0 0 16 16"><circle cx="8" cy="8" r="6.9" fill="none" stroke="#9294a0" stroke-width="1.8"/><path d="M6.4 5.2 V10.8 L10.6 8Z" fill="#9294a0"/></svg>
<div class="t" style="left:1348px;top:418.9px;color:#3c3e48">+3</div>
<div class="a" style="left:1348px;top:439.7px;width:19px;height:0;border-top:1px dashed #5c5f6b"></div>
<div class="r" style="right:63px;top:418.9px;">Last week</div>
<svg style="left:1540.3px;top:418.3px" width="20" height="20" viewBox="-10 -10 20 20"><path d="M5 -4.9 A6.9 6.9 0 1 0 5.9 3.7" fill="none" stroke="#006dca" stroke-width="2.2"/><path d="M2.6 -2.1 H7.7 V-7.6" fill="none" stroke="#006dca" stroke-width="2.2"/></svg>
<div class="a" style="left:262px;top:451.8px;width:1321px;height:1px;background:#e3e4ea"></div>
<div class="cb" style="left:285px;top:467.8px"></div>
<svg style="left:321px;top:468.3px" width="18" height="18" viewBox="0 0 18 18"><circle cx="9" cy="9" r="8" fill="none" stroke="#9294a0" stroke-width="1.7"/><path d="M9 4.5 V13.5 M4.5 9 H13.5" stroke="#9294a0" stroke-width="1.7"/></svg>
<div class="t" style="left:344px;top:468.8px;color:#006dca">obedience training for dogs near me</div>
<svg style="left:619.1px;top:473.3px" width="15" height="11" viewBox="0 0 15 11"><path d="M1.3 1 L6.2 5.5 L1.3 10 M8.2 1 L13.1 5.5 L8.2 10" fill="none" stroke="#9294a0" stroke-width="1.8" stroke-linecap="round" stroke-linejoin="round"/></svg>
<div class="a" style="left:664px;top:469.3px;width:18px;height:18px;background:#9ef0c6;border-radius:3px;color:#0b6b43;font-size:13px;font-weight:bold;line-height:18.5px;text-align:center">T</div>
<div class="r" style="right:760px;top:468.8px;">8,<span class="o">1</span>00</div>
<div class="r" style="right:692px;top:468.8px;">4<span class="o">1</span></div>
<div class="a" style="left:918px;top:471.8px;width:13px;height:13px;border-radius:50%;background:#ffbf2f"></div>
<div class="r" style="right:601.5px;top:468.8px;">30</div>
<div class="a" style="left:1008px;top:471.8px;width:13px;height:13px;border-radius:50%;background:#ffbf2f"></div>
<div class="r" style="right:483px;top:468.8px;"><span class="o">1</span>.73</div>
<div class="r" style="right:418px;top:468.8px;">0.26</div>
<div class="a" style="left:1228px;top:466.3px;width:1.5px;height:22px;background:#d3d5dc"></div>
<svg style="left:1201.1px;top:470.8px" width="17" height="15" viewBox="0 0 17 15"><path d="M1 14 V1 H16 V5.2" fill="none" stroke="#9294a0" stroke-width="1.8"/><path d="M0.1 1.4 H16.9" stroke="#9294a0" stroke-width="2.8"/><path d="M1 13.6 H7.6" stroke="#9294a0" stroke-width="1.8"/><circle cx="11.9" cy="9.3" r="2.9" fill="none" stroke="#9294a0" stroke-width="1.8"/><path d="M13.9 11.4 L16.2 13.7" stroke="#9294a0" stroke-width="1.8" stroke-linecap="round"/></svg>
<svg style="left:1238.3px;top:472.3px" width="18" height="11" viewBox="0 0 18 11"><path d="M7.7 1 H5.4 A4.5 4.5 0 0 0 5.4 10 H7.7 M10.3 1 H12.6 A4.5 4.5 0 0 1 12.6 10 H10.3" fill="none" stroke="#9294a0" stroke-width="1.8"/><path d="M6.3 5.5 H11.7" stroke="#9294a0" stroke-width="1.8" stroke-linecap="round"/></svg>
<svg style="left:1265.6px;top:468.8px" width="18" height="17" viewBox="0 0 18 17"><path d="M9 1.4 L11.1 6.4 L16.4 6.8 L12.3 10.2 L13.6 15.4 L9 12.6 L4.4 15.4 L5.7 10.2 L1.6 6.8 L6.9 6.4Z" fill="none" stroke="#9294a0" stroke-width="1.7" stroke-linejoin="miter"/></svg>
<svg style="left:1293.9px;top:470.3px" width="16" height="16" viewBox="0 0 16 16"><circle cx="8" cy="8" r="6.9" fill="none" stroke="#9294a0" stroke-width="1.8"/><path d="M6.4 5.2 V10.8 L10.6 8Z" fill="#9294a0"/></svg>
<svg style="left:1320.9px;top:468.8px" width="16" height="17" viewBox="0 0 16 17"><path d="M1 1 H15 V12.4 H6 L1 16.2Z" fill="none" stroke="#9294a0" stroke-width="1.7" stroke-linejoin="round"/><path d="M6.3 5 Q6.3 3.3 8 3.3 Q9.7 3.3 9.7 4.8 Q9.7 5.8 8.4 6.4 Q8 6.7 8 7.6" fill="none" stroke="#9294a0" stroke-width="1.1"/><circle cx="8" cy="9.3" r="0.75" fill="#9294a0"/></svg>
<div class="t" style="left:1348px;top:468.8px;color:#3c3e48">+2</div>
<div class="a" style="left:1348px;top:489.6px;width:19px;height:0;border-top:1px dashed #5c5f6b"></div>
<div class="r" style="right:63px;top:468.8px;">Last week</div>
<svg style="left:1540.3px;top:468.2px" width="20" height="20" viewBox="-10 -10 20 20"><path d="M5 -4.9 A6.9 6.9 0 1 0 5.9 3.7" fill="none" stroke="#006dca" stroke-width="2.2"/><path d="M2.6 -2.1 H7.7 V-7.6" fill="none" stroke="#006dca" stroke-width="2.2"/></svg>
<div class="a" style="left:262px;top:501.7px;width:1321px;height:1px;background:#e3e4ea"></div>
<div class="cb" style="left:285px;top:517.7px"></div>
<svg style="left:321px;top:518.2px" width="18" height="18" viewBox="0 0 18 18"><circle cx="9" cy="9" r="8" fill="none" stroke="#9294a0" stroke-width="1.7"/><path d="M9 4.5 V13.5 M4.5 9 H13.5" stroke="#9294a0" stroke-width="1.7"/></svg>
<div class="t" style="left:344px;top:518.7px;color:#006dca">obedience training for dogs</div>
<svg style="left:552.0px;top:523.2px" width="15" height="11" viewBox="0 0 15 11"><path d="M1.3 1 L6.2 5.5 L1.3 10 M8.2 1 L13.1 5.5 L8.2 10" fill="none" stroke="#9294a0" stroke-width="1.8" stroke-linecap="round" stroke-linejoin="round"/></svg>
<div class="a" style="left:664px;top:519.2px;width:18px;height:18px;background:#fcdc7f;border-radius:3px;color:#8a3d00;font-size:13px;font-weight:bold;line-height:18.5px;text-align:center">C</div>
<div class="r" style="right:760px;top:518.7px;">5,400</div>
<div class="r" style="right:692px;top:518.7px;">53</div>
<div class="a" style="left:918px;top:521.7px;width:13px;height:13px;border-radius:50%;background:#ff7a33"></div>
<div class="r" style="right:601.5px;top:518.7px;">85</div>
<div class="a" style="left:1008px;top:521.7px;width:13px;height:13px;border-radius:50%;background:#e5262f"></div>
<div class="r" style="right:483px;top:518.7px;">2.<span class="o">1</span><span class="o">1</span></div>
<div class="r" style="right:418px;top:518.7px;">0.32</div>
<div class="a" style="left:1228px;top:516.2px;width:1.5px;height:22px;background:#d3d5dc"></div>
<svg style="left:1201.1px;top:520.7px" width="17" height="15" viewBox="0 0 17 15"><path d="M1 14 V1 H16 V5.2" fill="none" stroke="#9294a0" stroke-width="1.8"/><path d="M0.1 1.4 H16.9" stroke="#9294a0" stroke-width="2.8"/><path d="M1 13.6 H7.6" stroke="#9294a0" stroke-width="1.8"/><circle cx="11.9" cy="9.3" r="2.9" fill="none" stroke="#9294a0" stroke-width="1.8"/><path d="M13.9 11.4 L16.2 13.7" stroke="#9294a0" stroke-width="1.8" stroke-linecap="round"/></svg>
<svg style="left:1238.3px;top:522.2px" width="18" height="11" viewBox="0 0 18 11"><path d="M7.7 1 H5.4 A4.5 4.5 0 0 0 5.4 10 H7.7 M10.3 1 H12.6 A4.5 4.5 0 0 1 12.6 10 H10.3" fill="none" stroke="#9294a0" stroke-width="1.8"/><path d="M6.3 5.5 H11.7" stroke="#9294a0" stroke-width="1.8" stroke-linecap="round"/></svg>
<svg style="left:1265.6px;top:518.7px" width="18" height="17" viewBox="0 0 18 17"><path d="M9 1.4 L11.1 6.4 L16.4 6.8 L12.3 10.2 L13.6 15.4 L9 12.6 L4.4 15.4 L5.7 10.2 L1.6 6.8 L6.9 6.4Z" fill="none" stroke="#9294a0" stroke-width="1.7" stroke-linejoin="miter"/></svg>
<svg style="left:1292.9px;top:519.7px" width="18" height="17" viewBox="0 0 18 17"><rect x="1.1" y="1.1" width="12.6" height="12" fill="none" stroke="#9294a0" stroke-width="1.8"/><path d="M16.9 4.6 V15.9 H3.6" fill="none" stroke="#9294a0" stroke-width="1.8"/><path d="M1.5 10 L5.6 12.2 L10.6 6 L13 8.2" fill="none" stroke="#9294a0" stroke-width="1.6"/><circle cx="4.4" cy="4.6" r="1.1" fill="#9294a0"/></svg>
<svg style="left:1320.9px;top:520.2px" width="16" height="16" viewBox="0 0 16 16"><circle cx="8" cy="8" r="6.9" fill="none" stroke="#9294a0" stroke-width="1.8"/><path d="M6.4 5.2 V10.8 L10.6 8Z" fill="#9294a0"/></svg>
<div class="t" style="left:1348px;top:518.7px;color:#3c3e48">+3</div>
<div class="a" style="left:1348px;top:539.5px;width:19px;height:0;border-top:1px dashed #5c5f6b"></div>
<div class="r" style="right:63px;top:518.7px;">Last week</div>
<svg style="left:1540.3px;top:518.1px" width="20" height="20" viewBox="-10 -10 20 20"><path d="M5 -4.9 A6.9 6.9 0 1 0 5.9 3.7" fill="none" stroke="#006dca" stroke-width="2.2"/><path d="M2.6 -2.1 H7.7 V-7.6" fill="none" stroke="#006dca" stroke-width="2.2"/></svg>
<div class="a" style="left:262px;top:551.6px;width:1321px;height:1px;background:#e3e4ea"></div>
<div class="cb" style="left:285px;top:567.6px"></div>
<svg style="left:321px;top:568.1px" width="18" height="18" viewBox="0 0 18 18"><circle cx="9" cy="9" r="8" fill="none" stroke="#9294a0" stroke-width="1.7"/><path d="M9 4.5 V13.5 M4.5 9 H13.5" stroke="#9294a0" stroke-width="1.7"/></svg>
<div class="t" style="left:344px;top:568.6px;color:#006dca">training dog obedience training</div>
<svg style="left:579.5px;top:573.1px" width="15" height="11" viewBox="0 0 15 11"><path d="M1.3 1 L6.2 5.5 L1.3 10 M8.2 1 L13.1 5.5 L8.2 10" fill="none" stroke="#9294a0" stroke-width="1.8" stroke-linecap="round" stroke-linejoin="round"/></svg>
<div class="a" style="left:664px;top:569.1px;width:18px;height:18px;background:#fcdc7f;border-radius:3px;color:#8a3d00;font-size:13px;font-weight:bold;line-height:18.5px;text-align:center">C</div>
<div class="r" style="right:760px;top:568.6px;">5,400</div>
<div class="r" style="right:692px;top:568.6px;">42</div>
<div class="a" style="left:918px;top:571.6px;width:13px;height:13px;border-radius:50%;background:#ffbf2f"></div>
<div class="r" style="right:601.5px;top:568.6px;">80</div>
<div class="a" style="left:1008px;top:571.6px;width:13px;height:13px;border-radius:50%;background:#e5262f"></div>
<div class="r" style="right:483px;top:568.6px;">0.00</div>
<div class="r" style="right:418px;top:568.6px;">0.00</div>
<div class="a" style="left:1228px;top:566.1px;width:1.5px;height:22px;background:#d3d5dc"></div>
<svg style="left:1201.1px;top:570.6px" width="17" height="15" viewBox="0 0 17 15"><path d="M1 14 V1 H16 V5.2" fill="none" stroke="#9294a0" stroke-width="1.8"/><path d="M0.1 1.4 H16.9" stroke="#9294a0" stroke-width="2.8"/><path d="M1 13.6 H7.6" stroke="#9294a0" stroke-width="1.8"/><circle cx="11.9" cy="9.3" r="2.9" fill="none" stroke="#9294a0" stroke-width="1.8"/><path d="M13.9 11.4 L16.2 13.7" stroke="#9294a0" stroke-width="1.8" stroke-linecap="round"/></svg>
<svg style="left:1238.3px;top:572.1px" width="18" height="11" viewBox="0 0 18 11"><path d="M7.7 1 H5.4 A4.5 4.5 0 0 0 5.4 10 H7.7 M10.3 1 H12.6 A4.5 4.5 0 0 1 12.6 10 H10.3" fill="none" stroke="#9294a0" stroke-width="1.8"/><path d="M6.3 5.5 H11.7" stroke="#9294a0" stroke-width="1.8" stroke-linecap="round"/></svg>
<svg style="left:1265.6px;top:568.6px" width="18" height="17" viewBox="0 0 18 17"><path d="M9 1.4 L11.1 6.4 L16.4 6.8 L12.3 10.2 L13.6 15.4 L9 12.6 L4.4 15.4 L5.7 10.2 L1.6 6.8 L6.9 6.4Z" fill="none" stroke="#9294a0" stroke-width="1.7" stroke-linejoin="miter"/></svg>
<svg style="left:1292.9px;top:569.6px" width="18" height="17" viewBox="0 0 18 17"><rect x="1.1" y="1.1" width="12.6" height="12" fill="none" stroke="#9294a0" stroke-width="1.8"/><path d="M16.9 4.6 V15.9 H3.6" fill="none" stroke="#9294a0" stroke-width="1.8"/><path d="M1.5 10 L5.6 12.2 L10.6 6 L13 8.2" fill="none" stroke="#9294a0" stroke-width="1.6"/><circle cx="4.4" cy="4.6" r="1.1" fill="#9294a0"/></svg>
<svg style="left:1320.9px;top:570.1px" width="16" height="16" viewBox="0 0 16 16"><circle cx="8" cy="8" r="6.9" fill="none" stroke="#9294a0" stroke-width="1.8"/><path d="M6.4 5.2 V10.8 L10.6 8Z" fill="#9294a0"/></svg>
<div class="t" style="left:1348px;top:568.6px;color:#3c3e48">+4</div>
<div class="a" style="left:1348px;top:589.4px;width:19px;height:0;border-top:1px dashed #5c5f6b"></div>
<div class="r" style="right:63px;top:568.6px;">Last week</div>
<svg style="left:1540.3px;top:568.0px" width="20" height="20" viewBox="-10 -10 20 20"><path d="M5 -4.9 A6.9 6.9 0 1 0 5.9 3.7" fill="none" stroke="#006dca" stroke-width="2.2"/><path d="M2.6 -2.1 H7.7 V-7.6" fill="none" stroke="#006dca" stroke-width="2.2"/></svg>
<div class="a" style="left:262px;top:601.5px;width:1321px;height:1px;background:#e3e4ea"></div>
<div class="cb" style="left:285px;top:617.5px"></div>
<svg style="left:321px;top:618.0px" width="18" height="18" viewBox="0 0 18 18"><circle cx="9" cy="9" r="8" fill="none" stroke="#9294a0" stroke-width="1.7"/><path d="M9 4.5 V13.5 M4.5 9 H13.5" stroke="#9294a0" stroke-width="1.7"/></svg>
<div class="t" style="left:344px;top:618.5px;color:#006dca">obedience training dogs</div>
<svg style="left:527.5px;top:623.0px" width="15" height="11" viewBox="0 0 15 11"><path d="M1.3 1 L6.2 5.5 L1.3 10 M8.2 1 L13.1 5.5 L8.2 10" fill="none" stroke="#9294a0" stroke-width="1.8" stroke-linecap="round" stroke-linejoin="round"/></svg>
<div class="a" style="left:664px;top:619.0px;width:18px;height:18px;background:#c4e5fc;border-radius:3px;color:#0a6cc2;font-size:13px;font-weight:bold;line-height:18.5px;text-align:center">I</div>
<div class="r" style="right:760px;top:618.5px;">2,900</div>
<div class="r" style="right:692px;top:618.5px;">55</div>
<div class="a" style="left:918px;top:621.5px;width:13px;height:13px;border-radius:50%;background:#ff7a33"></div>
<div class="r" style="right:601.5px;top:618.5px;">85</div>
<div class="a" style="left:1008px;top:621.5px;width:13px;height:13px;border-radius:50%;background:#e5262f"></div>
<div class="r" style="right:483px;top:618.5px;">2.09</div>
<div class="r" style="right:418px;top:618.5px;">0.29</div>
<div class="a" style="left:1228px;top:616.0px;width:1.5px;height:22px;background:#d3d5dc"></div>
<svg style="left:1201.1px;top:620.5px" width="17" height="15" viewBox="0 0 17 15"><path d="M1 14 V1 H16 V5.2" fill="none" stroke="#9294a0" stroke-width="1.8"/><path d="M0.1 1.4 H16.9" stroke="#9294a0" stroke-width="2.8"/><path d="M1 13.6 H7.6" stroke="#9294a0" stroke-width="1.8"/><circle cx="11.9" cy="9.3" r="2.9" fill="none" stroke="#9294a0" stroke-width="1.8"/><path d="M13.9 11.4 L16.2 13.7" stroke="#9294a0" stroke-width="1.8" stroke-linecap="round"/></svg>
<svg style="left:1238.3px;top:622.0px" width="18" height="11" viewBox="0 0 18 11"><path d="M7.7 1 H5.4 A4.5 4.5 0 0 0 5.4 10 H7.7 M10.3 1 H12.6 A4.5 4.5 0 0 1 12.6 10 H10.3" fill="none" stroke="#9294a0" stroke-width="1.8"/><path d="M6.3 5.5 H11.7" stroke="#9294a0" stroke-width="1.8" stroke-linecap="round"/></svg>
<svg style="left:1265.6px;top:618.5px" width="18" height="17" viewBox="0 0 18 17"><path d="M9 1.4 L11.1 6.4 L16.4 6.8 L12.3 10.2 L13.6 15.4 L9 12.6 L4.4 15.4 L5.7 10.2 L1.6 6.8 L6.9 6.4Z" fill="none" stroke="#9294a0" stroke-width="1.7" stroke-linejoin="miter"/></svg>
<svg style="left:1292.9px;top:619.5px" width="18" height="17" viewBox="0 0 18 17"><rect x="1.1" y="1.1" width="12.6" height="12" fill="none" stroke="#9294a0" stroke-width="1.8"/><path d="M16.9 4.6 V15.9 H3.6" fill="none" stroke="#9294a0" stroke-width="1.8"/><path d="M1.5 10 L5.6 12.2 L10.6 6 L13 8.2" fill="none" stroke="#9294a0" stroke-width="1.6"/><circle cx="4.4" cy="4.6" r="1.1" fill="#9294a0"/></svg>
<svg style="left:1320.9px;top:620.0px" width="16" height="16" viewBox="0 0 16 16"><circle cx="8" cy="8" r="6.9" fill="none" stroke="#9294a0" stroke-width="1.8"/><path d="M6.4 5.2 V10.8 L10.6 8Z" fill="#9294a0"/></svg>
<div class="t" style="left:1348px;top:618.5px;color:#3c3e48">+4</div>
<div class="a" style="left:1348px;top:639.3px;width:19px;height:0;border-top:1px dashed #5c5f6b"></div>
<div class="r" style="right:63px;top:618.5px;">2 weeks</div>
<svg style="left:1540.3px;top:617.9px" width="20" height="20" viewBox="-10 -10 20 20"><path d="M5 -4.9 A6.9 6.9 0 1 0 5.9 3.7" fill="none" stroke="#006dca" stroke-width="2.2"/><path d="M2.6 -2.1 H7.7 V-7.6" fill="none" stroke="#006dca" stroke-width="2.2"/></svg>
<div class="a" style="left:262px;top:651.4px;width:1321px;height:1px;background:#e3e4ea"></div>
<div class="cb" style="left:285px;top:667.4px"></div>
<svg style="left:321px;top:667.9px" width="18" height="18" viewBox="0 0 18 18"><circle cx="9" cy="9" r="8" fill="none" stroke="#9294a0" stroke-width="1.7"/><path d="M9 4.5 V13.5 M4.5 9 H13.5" stroke="#9294a0" stroke-width="1.7"/></svg>
<div class="t" style="left:344px;top:668.4px;color:#006dca">obedience dog training</div>
<svg style="left:519.0px;top:672.9px" width="15" height="11" viewBox="0 0 15 11"><path d="M1.3 1 L6.2 5.5 L1.3 10 M8.2 1 L13.1 5.5 L8.2 10" fill="none" stroke="#9294a0" stroke-width="1.8" stroke-linecap="round" stroke-linejoin="round"/></svg>
<div class="a" style="left:664px;top:668.9px;width:18px;height:18px;background:#c4e5fc;border-radius:3px;color:#0a6cc2;font-size:13px;font-weight:bold;line-height:18.5px;text-align:center">I</div>
<div class="r" style="right:760px;top:668.4px;"><span class="o">1</span>,600</div>
<div class="r" style="right:692px;top:668.4px;">52</div>
<div class="a" style="left:918px;top:671.4px;width:13px;height:13px;border-radius:50%;background:#ff7a33"></div>
<div class="r" style="right:601.5px;top:668.4px;">80</div>
<div class="a" style="left:1008px;top:671.4px;width:13px;height:13px;border-radius:50%;background:#e5262f"></div>
<div class="r" style="right:483px;top:668.4px;">2.09</div>
<div class="r" style="right:418px;top:668.4px;">0.29</div>
<div class="a" style="left:1228px;top:665.9px;width:1.5px;height:22px;background:#d3d5dc"></div>
<svg style="left:1201.1px;top:670.4px" width="17" height="15" viewBox="0 0 17 15"><path d="M1 14 V1 H16 V5.2" fill="none" stroke="#9294a0" stroke-width="1.8"/><path d="M0.1 1.4 H16.9" stroke="#9294a0" stroke-width="2.8"/><path d="M1 13.6 H7.6" stroke="#9294a0" stroke-width="1.8"/><circle cx="11.9" cy="9.3" r="2.9" fill="none" stroke="#9294a0" stroke-width="1.8"/><path d="M13.9 11.4 L16.2 13.7" stroke="#9294a0" stroke-width="1.8" stroke-linecap="round"/></svg>
<svg style="left:1238.3px;top:671.9px" width="18" height="11" viewBox="0 0 18 11"><path d="M7.7 1 H5.4 A4.5 4.5 0 0 0 5.4 10 H7.7 M10.3 1 H12.6 A4.5 4.5 0 0 1 12.6 10 H10.3" fill="none" stroke="#9294a0" stroke-width="1.8"/><path d="M6.3 5.5 H11.7" stroke="#9294a0" stroke-width="1.8" stroke-linecap="round"/></svg>
<svg style="left:1265.6px;top:668.4px" width="18" height="17" viewBox="0 0 18 17"><path d="M9 1.4 L11.1 6.4 L16.4 6.8 L12.3 10.2 L13.6 15.4 L9 12.6 L4.4 15.4 L5.7 10.2 L1.6 6.8 L6.9 6.4Z" fill="none" stroke="#9294a0" stroke-width="1.7" stroke-linejoin="miter"/></svg>
<svg style="left:1293.9px;top:669.9px" width="16" height="14" viewBox="0 0 16 14"><rect x="1.1" y="1.1" width="13.8" height="11.8" fill="none" stroke="#9294a0" stroke-width="1.8"/><path d="M1.5 9.5 L5.6 11.8 L10.6 5.6 L14 8.6" fill="none" stroke="#9294a0" stroke-width="1.6"/><circle cx="4.6" cy="4.6" r="1.1" fill="#9294a0"/></svg>
<svg style="left:1319.9px;top:669.4px" width="18" height="17" viewBox="0 0 18 17"><rect x="1.1" y="1.1" width="12.6" height="12" fill="none" stroke="#9294a0" stroke-width="1.8"/><path d="M16.9 4.6 V15.9 H3.6" fill="none" stroke="#9294a0" stroke-width="1.8"/><path d="M1.5 10 L5.6 12.2 L10.6 6 L13 8.2" fill="none" stroke="#9294a0" stroke-width="1.6"/><circle cx="4.4" cy="4.6" r="1.1" fill="#9294a0"/></svg>
<div class="t" style="left:1348px;top:668.4px;color:#3c3e48">+5</div>
<div class="a" style="left:1348px;top:689.2px;width:19px;height:0;border-top:1px dashed #5c5f6b"></div>
<div class="r" style="right:63px;top:668.4px;">Last week</div>
<svg style="left:1540.3px;top:667.8px" width="20" height="20" viewBox="-10 -10 20 20"><path d="M5 -4.9 A6.9 6.9 0 1 0 5.9 3.7" fill="none" stroke="#006dca" stroke-width="2.2"/><path d="M2.6 -2.1 H7.7 V-7.6" fill="none" stroke="#006dca" stroke-width="2.2"/></svg>
<div class="a" style="left:262px;top:701.3px;width:1321px;height:1px;background:#e3e4ea"></div>
<div class="cb" style="left:285px;top:717.3px"></div>
<svg style="left:321px;top:717.8px" width="18" height="18" viewBox="0 0 18 18"><circle cx="9" cy="9" r="8" fill="none" stroke="#9294a0" stroke-width="1.7"/><path d="M9 4.5 V13.5 M4.5 9 H13.5" stroke="#9294a0" stroke-width="1.7"/></svg>
<div class="t" style="left:344px;top:718.3px;color:#006dca">obedience dog training near me</div>
<svg style="left:586.1px;top:722.8px" width="15" height="11" viewBox="0 0 15 11"><path d="M1.3 1 L6.2 5.5 L1.3 10 M8.2 1 L13.1 5.5 L8.2 10" fill="none" stroke="#9294a0" stroke-width="1.8" stroke-linecap="round" stroke-linejoin="round"/></svg>
<div class="a" style="left:664px;top:718.8px;width:18px;height:18px;background:#9ef0c6;border-radius:3px;color:#0b6b43;font-size:13px;font-weight:bold;line-height:18.5px;text-align:center">T</div>
<div class="r" style="right:760px;top:718.3px;"><span class="o">1</span>,300</div>
<div class="r" style="right:692px;top:718.3px;">42</div>
<div class="a" style="left:918px;top:721.3px;width:13px;height:13px;border-radius:50%;background:#ffbf2f"></div>
<div class="r" style="right:601.5px;top:718.3px;">27</div>
<div class="a" style="left:1008px;top:721.3px;width:13px;height:13px;border-radius:50%;background:#4fd49b"></div>
<div class="r" style="right:483px;top:718.3px;">2.07</div>
<div class="r" style="right:418px;top:718.3px;">0.35</div>
<div class="a" style="left:1228px;top:715.8px;width:1.5px;height:22px;background:#d3d5dc"></div>
<svg style="left:1201.1px;top:720.3px" width="17" height="15" viewBox="0 0 17 15"><path d="M1 14 V1 H16 V5.2" fill="none" stroke="#9294a0" stroke-width="1.8"/><path d="M0.1 1.4 H16.9" stroke="#9294a0" stroke-width="2.8"/><path d="M1 13.6 H7.6" stroke="#9294a0" stroke-width="1.8"/><circle cx="11.9" cy="9.3" r="2.9" fill="none" stroke="#9294a0" stroke-width="1.8"/><path d="M13.9 11.4 L16.2 13.7" stroke="#9294a0" stroke-width="1.8" stroke-linecap="round"/></svg>
<svg style="left:1238.3px;top:721.8px" width="18" height="11" viewBox="0 0 18 11"><path d="M7.7 1 H5.4 A4.5 4.5 0 0 0 5.4 10 H7.7 M10.3 1 H12.6 A4.5 4.5 0 0 1 12.6 10 H10.3" fill="none" stroke="#9294a0" stroke-width="1.8"/><path d="M6.3 5.5 H11.7" stroke="#9294a0" stroke-width="1.8" stroke-linecap="round"/></svg>
<svg style="left:1265.6px;top:718.3px" width="18" height="17" viewBox="0 0 18 17"><path d="M9 1.4 L11.1 6.4 L16.4 6.8 L12.3 10.2 L13.6 15.4 L9 12.6 L4.4 15.4 L5.7 10.2 L1.6 6.8 L6.9 6.4Z" fill="none" stroke="#9294a0" stroke-width="1.7" stroke-linejoin="miter"/></svg>
<svg style="left:1292.9px;top:719.3px" width="18" height="17" viewBox="0 0 18 17"><rect x="1.1" y="1.1" width="12.6" height="12" fill="none" stroke="#9294a0" stroke-width="1.8"/><path d="M16.9 4.6 V15.9 H3.6" fill="none" stroke="#9294a0" stroke-width="1.8"/><path d="M1.5 10 L5.6 12.2 L10.6 6 L13 8.2" fill="none" stroke="#9294a0" stroke-width="1.6"/><circle cx="4.4" cy="4.6" r="1.1" fill="#9294a0"/></svg>
<svg style="left:1320.4px;top:718.8px" width="17" height="16" viewBox="0 0 17 16"><rect x="5" y="1" width="7.4" height="14" rx="1.6" fill="none" stroke="#9294a0" stroke-width="1.8"/><path d="M4.6 3.4 H2.6 Q1 3.4 1 5 V11 Q1 12.6 2.6 12.6 H4.6 M12.8 3.4 H14.6 Q16.2 3.4 16.2 5 V11 Q16.2 12.6 14.6 12.6 H12.8" fill="none" stroke="#9294a0" stroke-width="1.8"/><path d="M7.2 5.6 V10.2 L10.4 7.9Z" fill="#9294a0"/></svg>
<div class="t" style="left:1348px;top:718.3px;color:#3c3e48">+3</div>
<div class="a" style="left:1348px;top:739.1px;width:19px;height:0;border-top:1px dashed #5c5f6b"></div>
<div class="r" style="right:63px;top:718.3px;">2 weeks</div>
<svg style="left:1540.3px;top:717.7px" width="20" height="20" viewBox="-10 -10 20 20"><path d="M5 -4.9 A6.9 6.9 0 1 0 5.9 3.7" fill="none" stroke="#006dca" stroke-width="2.2"/><path d="M2.6 -2.1 H7.7 V-7.6" fill="none" stroke="#006dca" stroke-width="2.2"/></svg>
<div class="a" style="left:262px;top:751.2px;width:1321px;height:1px;background:#e3e4ea"></div>
<div class="cb" style="left:285px;top:767.2px"></div>
<svg style="left:321px;top:767.7px" width="18" height="18" viewBox="0 0 18 18"><circle cx="9" cy="9" r="8" fill="none" stroke="#9294a0" stroke-width="1.7"/><path d="M9 4.5 V13.5 M4.5 9 H13.5" stroke="#9294a0" stroke-width="1.7"/></svg>
<div class="t" style="left:344px;top:768.2px;color:#006dca">dog obedience training classes</div>
<svg style="left:580.4px;top:772.7px" width="15" height="11" viewBox="0 0 15 11"><path d="M1.3 1 L6.2 5.5 L1.3 10 M8.2 1 L13.1 5.5 L8.2 10" fill="none" stroke="#9294a0" stroke-width="1.8" stroke-linecap="round" stroke-linejoin="round"/></svg>
<div class="a" style="left:664px;top:768.7px;width:18px;height:18px;background:#fcdc7f;border-radius:3px;color:#8a3d00;font-size:13px;font-weight:bold;line-height:18.5px;text-align:center">C</div>
<div class="r" style="right:760px;top:768.2px;">480</div>
<div class="r" style="right:692px;top:768.2px;">39</div>
<div class="a" style="left:918px;top:771.2px;width:13px;height:13px;border-radius:50%;background:#ffbf2f"></div>
<div class="r" style="right:601.5px;top:768.2px;">44</div>
<div class="a" style="left:1008px;top:771.2px;width:13px;height:13px;border-radius:50%;background:#ffbf2f"></div>
<div class="r" style="right:483px;top:768.2px;"><span class="o">1</span>.80</div>
<div class="r" style="right:418px;top:768.2px;">0.24</div>
<div class="a" style="left:1228px;top:765.7px;width:1.5px;height:22px;background:#d3d5dc"></div>
<svg style="left:1201.1px;top:770.2px" width="17" height="15" viewBox="0 0 17 15"><path d="M1 14 V1 H16 V5.2" fill="none" stroke="#9294a0" stroke-width="1.8"/><path d="M0.1 1.4 H16.9" stroke="#9294a0" stroke-width="2.8"/><path d="M1 13.6 H7.6" stroke="#9294a0" stroke-width="1.8"/><circle cx="11.9" cy="9.3" r="2.9" fill="none" stroke="#9294a0" stroke-width="1.8"/><path d="M13.9 11.4 L16.2 13.7" stroke="#9294a0" stroke-width="1.8" stroke-linecap="round"/></svg>
<svg style="left:1238.3px;top:771.7px" width="18" height="11" viewBox="0 0 18 11"><path d="M7.7 1 H5.4 A4.5 4.5 0 0 0 5.4 10 H7.7 M10.3 1 H12.6 A4.5 4.5 0 0 1 12.6 10 H10.3" fill="none" stroke="#9294a0" stroke-width="1.8"/><path d="M6.3 5.5 H11.7" stroke="#9294a0" stroke-width="1.8" stroke-linecap="round"/></svg>
<svg style="left:1265.6px;top:768.2px" width="18" height="17" viewBox="0 0 18 17"><path d="M9 1.4 L11.1 6.4 L16.4 6.8 L12.3 10.2 L13.6 15.4 L9 12.6 L4.4 15.4 L5.7 10.2 L1.6 6.8 L6.9 6.4Z" fill="none" stroke="#9294a0" stroke-width="1.7" stroke-linejoin="miter"/></svg>
<svg style="left:1292.9px;top:769.2px" width="18" height="17" viewBox="0 0 18 17"><rect x="1.1" y="1.1" width="12.6" height="12" fill="none" stroke="#9294a0" stroke-width="1.8"/><path d="M16.9 4.6 V15.9 H3.6" fill="none" stroke="#9294a0" stroke-width="1.8"/><path d="M1.5 10 L5.6 12.2 L10.6 6 L13 8.2" fill="none" stroke="#9294a0" stroke-width="1.6"/><circle cx="4.4" cy="4.6" r="1.1" fill="#9294a0"/></svg>
<svg style="left:1320.4px;top:768.7px" width="17" height="16" viewBox="0 0 17 16"><rect x="5" y="1" width="7.4" height="14" rx="1.6" fill="none" stroke="#9294a0" stroke-width="1.8"/><path d="M4.6 3.4 H2.6 Q1 3.4 1 5 V11 Q1 12.6 2.6 12.6 H4.6 M12.8 3.4 H14.6 Q16.2 3.4 16.2 5 V11 Q16.2 12.6 14.6 12.6 H12.8" fill="none" stroke="#9294a0" stroke-width="1.8"/><path d="M7.2 5.6 V10.2 L10.4 7.9Z" fill="#9294a0"/></svg>
<div class="t" style="left:1348px;top:768.2px;color:#3c3e48">+3</div>
<div class="a" style="left:1348px;top:789.0px;width:19px;height:0;border-top:1px dashed #5c5f6b"></div>
<div class="r" style="right:63px;top:768.2px;">2 weeks</div>
<svg style="left:1540.3px;top:767.6px" width="20" height="20" viewBox="-10 -10 20 20"><path d="M5 -4.9 A6.9 6.9 0 1 0 5.9 3.7" fill="none" stroke="#006dca" stroke-width="2.2"/><path d="M2.6 -2.1 H7.7 V-7.6" fill="none" stroke="#006dca" stroke-width="2.2"/></svg>
<div class="a" style="left:262px;top:801.1px;width:1321px;height:1px;background:#e3e4ea"></div>
<div class="cb" style="left:285px;top:817.1px"></div>
<svg style="left:321px;top:817.6px" width="18" height="18" viewBox="0 0 18 18"><circle cx="9" cy="9" r="8" fill="none" stroke="#9294a0" stroke-width="1.7"/><path d="M9 4.5 V13.5 M4.5 9 H13.5" stroke="#9294a0" stroke-width="1.7"/></svg>
<div class="t" style="left:344px;top:818.1px;color:#006dca">basic obedience dog training</div>
<svg style="left:563.4px;top:822.6px" width="15" height="11" viewBox="0 0 15 11"><path d="M1.3 1 L6.2 5.5 L1.3 10 M8.2 1 L13.1 5.5 L8.2 10" fill="none" stroke="#9294a0" stroke-width="1.8" stroke-linecap="round" stroke-linejoin="round"/></svg>
<div class="a" style="left:664px;top:818.6px;width:18px;height:18px;background:#c4e5fc;border-radius:3px;color:#0a6cc2;font-size:13px;font-weight:bold;line-height:18.5px;text-align:center">I</div>
<div class="r" style="right:760px;top:818.1px;">390</div>
<div class="r" style="right:692px;top:818.1px;">4<span class="o">1</span></div>
<div class="a" style="left:918px;top:821.1px;width:13px;height:13px;border-radius:50%;background:#ffbf2f"></div>
<div class="r" style="right:601.5px;top:818.1px;">45</div>
<div class="a" style="left:1008px;top:821.1px;width:13px;height:13px;border-radius:50%;background:#ffbf2f"></div>
<div class="r" style="right:483px;top:818.1px;"><span class="o">1</span>.89</div>
<div class="r" style="right:418px;top:818.1px;">0.34</div>
<div class="a" style="left:1228px;top:815.6px;width:1.5px;height:22px;background:#d3d5dc"></div>
<svg style="left:1201.1px;top:820.1px" width="17" height="15" viewBox="0 0 17 15"><path d="M1 14 V1 H16 V5.2" fill="none" stroke="#9294a0" stroke-width="1.8"/><path d="M0.1 1.4 H16.9" stroke="#9294a0" stroke-width="2.8"/><path d="M1 13.6 H7.6" stroke="#9294a0" stroke-width="1.8"/><circle cx="11.9" cy="9.3" r="2.9" fill="none" stroke="#9294a0" stroke-width="1.8"/><path d="M13.9 11.4 L16.2 13.7" stroke="#9294a0" stroke-width="1.8" stroke-linecap="round"/></svg>
<svg style="left:1238.3px;top:821.6px" width="18" height="11" viewBox="0 0 18 11"><path d="M7.7 1 H5.4 A4.5 4.5 0 0 0 5.4 10 H7.7 M10.3 1 H12.6 A4.5 4.5 0 0 1 12.6 10 H10.3" fill="none" stroke="#9294a0" stroke-width="1.8"/><path d="M6.3 5.5 H11.7" stroke="#9294a0" stroke-width="1.8" stroke-linecap="round"/></svg>
<svg style="left:1265.6px;top:818.1px" width="18" height="17" viewBox="0 0 18 17"><path d="M9 1.4 L11.1 6.4 L16.4 6.8 L12.3 10.2 L13.6 15.4 L9 12.6 L4.4 15.4 L5.7 10.2 L1.6 6.8 L6.9 6.4Z" fill="none" stroke="#9294a0" stroke-width="1.7" stroke-linejoin="miter"/></svg>
<svg style="left:1292.9px;top:819.1px" width="18" height="17" viewBox="0 0 18 17"><rect x="1.1" y="1.1" width="12.6" height="12" fill="none" stroke="#9294a0" stroke-width="1.8"/><path d="M16.9 4.6 V15.9 H3.6" fill="none" stroke="#9294a0" stroke-width="1.8"/><path d="M1.5 10 L5.6 12.2 L10.6 6 L13 8.2" fill="none" stroke="#9294a0" stroke-width="1.6"/><circle cx="4.4" cy="4.6" r="1.1" fill="#9294a0"/></svg>
<svg style="left:1320.9px;top:819.6px" width="16" height="16" viewBox="0 0 16 16"><circle cx="8" cy="8" r="6.9" fill="none" stroke="#9294a0" stroke-width="1.8"/><path d="M6.4 5.2 V10.8 L10.6 8Z" fill="#9294a0"/></svg>
<div class="t" style="left:1348px;top:818.1px;color:#3c3e48">+3</div>
<div class="a" style="left:1348px;top:838.9px;width:19px;height:0;border-top:1px dashed #5c5f6b"></div>
<div class="r" style="right:63px;top:818.1px;">2 weeks</div>
<svg style="left:1540.3px;top:817.5px" width="20" height="20" viewBox="-10 -10 20 20"><path d="M5 -4.9 A6.9 6.9 0 1 0 5.9 3.7" fill="none" stroke="#006dca" stroke-width="2.2"/><path d="M2.6 -2.1 H7.7 V-7.6" fill="none" stroke="#006dca" stroke-width="2.2"/></svg>
<div class="a" style="left:262px;top:851.0px;width:1321px;height:1px;background:#e3e4ea"></div>
<div class="cb" style="left:285px;top:867.0px"></div>
<svg style="left:321px;top:867.5px" width="18" height="18" viewBox="0 0 18 18"><circle cx="9" cy="9" r="8" fill="none" stroke="#9294a0" stroke-width="1.7"/><path d="M9 4.5 V13.5 M4.5 9 H13.5" stroke="#9294a0" stroke-width="1.7"/></svg>
<div class="t" style="left:344px;top:868.0px;color:#006dca">obedience training schools for dogs</div>
<svg style="left:614.4px;top:872.5px" width="15" height="11" viewBox="0 0 15 11"><path d="M1.3 1 L6.2 5.5 L1.3 10 M8.2 1 L13.1 5.5 L8.2 10" fill="none" stroke="#9294a0" stroke-width="1.8" stroke-linecap="round" stroke-linejoin="round"/></svg>
<div class="a" style="left:664px;top:868.5px;width:18px;height:18px;background:#fcdc7f;border-radius:3px;color:#8a3d00;font-size:13px;font-weight:bold;line-height:18.5px;text-align:center">C</div>
<div class="r" style="right:760px;top:868.0px;">390</div>
<div class="r" style="right:692px;top:868.0px;color:#6c6e79">n/a</div>
<div class="a" style="left:918px;top:871.0px;width:13px;height:13px;border-radius:50%;background:#dcdde3"></div>
<div class="r" style="right:601.5px;top:868.0px;">68</div>
<div class="a" style="left:1008px;top:871.0px;width:13px;height:13px;border-radius:50%;background:#ff7a33"></div>
<div class="r" style="right:483px;top:868.0px;"><span class="o">1</span>.94</div>
<div class="r" style="right:418px;top:868.0px;">0.32</div>
<div class="a" style="left:1228px;top:865.5px;width:1.5px;height:22px;background:#d3d5dc"></div>
<svg style="left:1201.1px;top:870.0px" width="17" height="15" viewBox="0 0 17 15"><path d="M1 14 V1 H16 V5.2" fill="none" stroke="#9294a0" stroke-width="1.8"/><path d="M0.1 1.4 H16.9" stroke="#9294a0" stroke-width="2.8"/><path d="M1 13.6 H7.6" stroke="#9294a0" stroke-width="1.8"/><circle cx="11.9" cy="9.3" r="2.9" fill="none" stroke="#9294a0" stroke-width="1.8"/><path d="M13.9 11.4 L16.2 13.7" stroke="#9294a0" stroke-width="1.8" stroke-linecap="round"/></svg>
<svg style="left:1238.3px;top:871.5px" width="18" height="11" viewBox="0 0 18 11"><path d="M7.7 1 H5.4 A4.5 4.5 0 0 0 5.4 10 H7.7 M10.3 1 H12.6 A4.5 4.5 0 0 1 12.6 10 H10.3" fill="none" stroke="#9294a0" stroke-width="1.8"/><path d="M6.3 5.5 H11.7" stroke="#9294a0" stroke-width="1.8" stroke-linecap="round"/></svg>
<svg style="left:1265.6px;top:869.0px" width="18" height="17" viewBox="0 0 18 17"><rect x="1.1" y="1.1" width="12.6" height="12" fill="none" stroke="#9294a0" stroke-width="1.8"/><path d="M16.9 4.6 V15.9 H3.6" fill="none" stroke="#9294a0" stroke-width="1.8"/><path d="M1.5 10 L5.6 12.2 L10.6 6 L13 8.2" fill="none" stroke="#9294a0" stroke-width="1.6"/><circle cx="4.4" cy="4.6" r="1.1" fill="#9294a0"/></svg>
<svg style="left:1293.4px;top:868.5px" width="17" height="16" viewBox="0 0 17 16"><rect x="5" y="1" width="7.4" height="14" rx="1.6" fill="none" stroke="#9294a0" stroke-width="1.8"/><path d="M4.6 3.4 H2.6 Q1 3.4 1 5 V11 Q1 12.6 2.6 12.6 H4.6 M12.8 3.4 H14.6 Q16.2 3.4 16.2 5 V11 Q16.2 12.6 14.6 12.6 H12.8" fill="none" stroke="#9294a0" stroke-width="1.8"/><path d="M7.2 5.6 V10.2 L10.4 7.9Z" fill="#9294a0"/></svg>
<svg style="left:1320.9px;top:868.0px" width="16" height="17" viewBox="0 0 16 17"><path d="M1 1 H15 V12.4 H6 L1 16.2Z" fill="none" stroke="#9294a0" stroke-width="1.7" stroke-linejoin="round"/><path d="M6.3 5 Q6.3 3.3 8 3.3 Q9.7 3.3 9.7 4.8 Q9.7 5.8 8.4 6.4 Q8 6.7 8 7.6" fill="none" stroke="#9294a0" stroke-width="1.1"/><circle cx="8" cy="9.3" r="0.75" fill="#9294a0"/></svg>
<svg style="left:1348.2px;top:867.5px" width="16" height="18" viewBox="0 0 16 18"><path d="M8 16.8 C4.5 13.5 1 10.5 1 7.5 A7 7 0 0 1 15 7.5 C15 10.5 11.5 13.5 8 16.8Z" fill="none" stroke="#9294a0" stroke-width="1.8" stroke-linejoin="round"/><circle cx="8" cy="7.6" r="2" fill="#9294a0"/></svg>
<div class="r" style="right:63px;top:868.0px;">Last week</div>
<svg style="left:1540.3px;top:867.4px" width="20" height="20" viewBox="-10 -10 20 20"><path d="M5 -4.9 A6.9 6.9 0 1 0 5.9 3.7" fill="none" stroke="#006dca" stroke-width="2.2"/><path d="M2.6 -2.1 H7.7 V-7.6" fill="none" stroke="#006dca" stroke-width="2.2"/></svg>
<div class="a" style="left:262px;top:900.9px;width:1321px;height:1px;background:#e3e4ea"></div>
<div class="cb" style="left:285px;top:916.9px"></div>
<svg style="left:321px;top:917.4px" width="18" height="18" viewBox="0 0 18 18"><circle cx="9" cy="9" r="8" fill="none" stroke="#9294a0" stroke-width="1.7"/><path d="M9 4.5 V13.5 M4.5 9 H13.5" stroke="#9294a0" stroke-width="1.7"/></svg>
<div class="t" style="left:344px;top:917.9px;color:#006dca">dog obedience training cost</div>
<svg style="left:554.9px;top:922.4px" width="15" height="11" viewBox="0 0 15 11"><path d="M1.3 1 L6.2 5.5 L1.3 10 M8.2 1 L13.1 5.5 L8.2 10" fill="none" stroke="#9294a0" stroke-width="1.8" stroke-linecap="round" stroke-linejoin="round"/></svg>
<div class="a" style="left:664px;top:918.4px;width:18px;height:18px;background:#c4e5fc;border-radius:3px;color:#0a6cc2;font-size:13px;font-weight:bold;line-height:18.5px;text-align:center">I</div>
<div class="r" style="right:760px;top:917.9px;">320</div>
<div class="r" style="right:692px;top:917.9px;">50</div>
<div class="a" style="left:918px;top:920.9px;width:13px;height:13px;border-radius:50%;background:#ff7a33"></div>
<div class="r" style="right:601.5px;top:917.9px;">34</div>
<div class="a" style="left:1008px;top:920.9px;width:13px;height:13px;border-radius:50%;background:#ffbf2f"></div>
<div class="r" style="right:483px;top:917.9px;"><span class="o">1</span>.<span class="o">1</span>8</div>
<div class="r" style="right:418px;top:917.9px;">0.38</div>
<div class="a" style="left:1228px;top:915.4px;width:1.5px;height:22px;background:#d3d5dc"></div>
<svg style="left:1201.1px;top:919.9px" width="17" height="15" viewBox="0 0 17 15"><path d="M1 14 V1 H16 V5.2" fill="none" stroke="#9294a0" stroke-width="1.8"/><path d="M0.1 1.4 H16.9" stroke="#9294a0" stroke-width="2.8"/><path d="M1 13.6 H7.6" stroke="#9294a0" stroke-width="1.8"/><circle cx="11.9" cy="9.3" r="2.9" fill="none" stroke="#9294a0" stroke-width="1.8"/><path d="M13.9 11.4 L16.2 13.7" stroke="#9294a0" stroke-width="1.8" stroke-linecap="round"/></svg>
<svg style="left:1238.3px;top:918.4px" width="18" height="17" viewBox="0 0 18 17"><path d="M1.2 5.8 L5.3 8.2 L9 1.2 L12.7 8.2 L16.8 5.8 L14.2 12.4 H3.8Z" fill="none" stroke="#9294a0" stroke-width="1.7" stroke-linejoin="miter"/><path d="M3.8 16 H14.2" stroke="#9294a0" stroke-width="1.8"/></svg>
<svg style="left:1265.6px;top:921.4px" width="18" height="11" viewBox="0 0 18 11"><path d="M7.7 1 H5.4 A4.5 4.5 0 0 0 5.4 10 H7.7 M10.3 1 H12.6 A4.5 4.5 0 0 1 12.6 10 H10.3" fill="none" stroke="#9294a0" stroke-width="1.8"/><path d="M6.3 5.5 H11.7" stroke="#9294a0" stroke-width="1.8" stroke-linecap="round"/></svg>
<svg style="left:1292.9px;top:917.9px" width="18" height="17" viewBox="0 0 18 17"><path d="M9 1.4 L11.1 6.4 L16.4 6.8 L12.3 10.2 L13.6 15.4 L9 12.6 L4.4 15.4 L5.7 10.2 L1.6 6.8 L6.9 6.4Z" fill="none" stroke="#9294a0" stroke-width="1.7" stroke-linejoin="miter"/></svg>
<svg style="left:1319.9px;top:918.9px" width="18" height="17" viewBox="0 0 18 17"><rect x="1.1" y="1.1" width="12.6" height="12" fill="none" stroke="#9294a0" stroke-width="1.8"/><path d="M16.9 4.6 V15.9 H3.6" fill="none" stroke="#9294a0" stroke-width="1.8"/><path d="M1.5 10 L5.6 12.2 L10.6 6 L13 8.2" fill="none" stroke="#9294a0" stroke-width="1.6"/><circle cx="4.4" cy="4.6" r="1.1" fill="#9294a0"/></svg>
<div class="t" style="left:1348px;top:917.9px;color:#3c3e48">+2</div>
<div class="a" style="left:1348px;top:938.7px;width:19px;height:0;border-top:1px dashed #5c5f6b"></div>
<div class="r" style="right:63px;top:917.9px;">3 weeks</div>
<svg style="left:1540.3px;top:917.3px" width="20" height="20" viewBox="-10 -10 20 20"><path d="M5 -4.9 A6.9 6.9 0 1 0 5.9 3.7" fill="none" stroke="#006dca" stroke-width="2.2"/><path d="M2.6 -2.1 H7.7 V-7.6" fill="none" stroke="#006dca" stroke-width="2.2"/></svg>
<div class="a" style="left:262px;top:950.8px;width:1321px;height:1px;background:#e3e4ea"></div>
<div class="a" style="left:0;top:902px;width:1600px;height:50px;background:linear-gradient(to bottom, rgba(255,255,255,0) 0px, #fff 45px)"></div>
</body></html>
